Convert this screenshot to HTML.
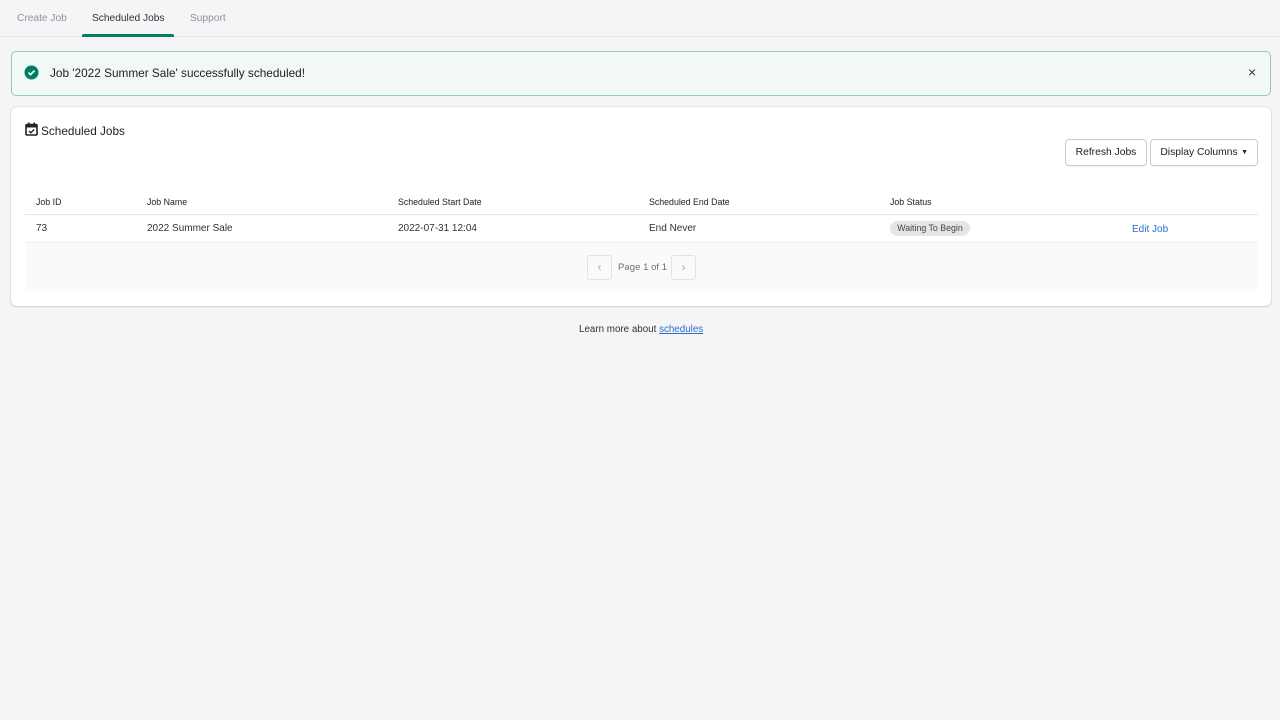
<!DOCTYPE html>
<html><head><meta charset="utf-8"><style>
*{box-sizing:border-box;margin:0;padding:0}
body{width:1280px;height:720px;background:#f5f5f7;font-family:"Liberation Sans",sans-serif;color:#202223;position:relative;overflow:hidden}
.abs{position:absolute}
.tabs{position:absolute;left:0;top:0;width:1280px;height:37px;border-bottom:1px solid #e4e5e7}
.tab{position:absolute;top:13px;font-size:10.2px;color:#8c9196}
.banner{left:11px;top:51px;width:1260px;height:45px;background:#f1f8f5;border:1px solid #95c9b4;border-radius:5px}
.card{left:11px;top:107px;width:1260px;height:199px;background:#fff;border-radius:6px;box-shadow:0 0 0 1px rgba(0,0,0,.05),0 1px 2px rgba(0,0,0,.12)}
.btn{position:absolute;top:139px;height:27px;border:1px solid #c9cccf;border-radius:4px;background:#fff;font-size:10.3px;line-height:25px;text-align:center;box-shadow:0 1px 0 rgba(0,0,0,.05)}
.th{position:absolute;top:197px;font-size:8.8px;color:#202223}
.td{position:absolute;top:223px;font-size:10px;color:#303235}
</style></head><body>
<div class="tabs"></div>
<div class="tab" style="left:17px">Create Job</div>
<div class="tab" style="left:92px;color:#303235">Scheduled Jobs</div>
<div class="abs" style="left:82px;top:34px;width:92px;height:3px;background:#008060;border-radius:2px 2px 0 0"></div>
<div class="tab" style="left:190px">Support</div>

<div class="abs banner"></div>
<svg class="abs" style="left:24px;top:65px" width="15" height="15" viewBox="0 0 15 15"><circle cx="7.5" cy="7.5" r="7" fill="#007f5f"/><path d="M4.5 7.6l2 2 4-4" stroke="#fff" stroke-width="1.7" fill="none"/></svg>
<div class="abs" style="left:50px;top:66px;font-size:11.8px;color:#202223">Job '2022 Summer Sale' successfully scheduled!</div>
<div class="abs" style="left:1248px;top:64px;font-size:14px;color:#303235">×</div>

<div class="abs card"></div>
<svg class="abs" style="left:25px;top:122px" width="13" height="14" viewBox="0 0 13 14"><rect x="1" y="2.5" width="11" height="10.5" rx="1" stroke="#202223" stroke-width="1.6" fill="none"/><rect x="1" y="2.5" width="11" height="3" fill="#202223"/><rect x="3" y="0.5" width="1.6" height="3" fill="#202223"/><rect x="8.4" y="0.5" width="1.6" height="3" fill="#202223"/><path d="M4 9l1.8 1.8 3.3-3.3" stroke="#202223" stroke-width="1.4" fill="none"/></svg>
<div class="abs" style="left:41px;top:124px;font-size:11.8px;color:#202223">Scheduled Jobs</div>
<div class="btn" style="left:1065px;width:82px">Refresh Jobs</div>
<div class="btn" style="left:1150px;width:108px;padding-right:10px">Display Columns<span style="position:absolute;right:9px;font-size:7px">▼</span></div>

<div class="th" style="left:36px">Job ID</div>
<div class="th" style="left:147px">Job Name</div>
<div class="th" style="left:398px">Scheduled Start Date</div>
<div class="th" style="left:649px">Scheduled End Date</div>
<div class="th" style="left:890px">Job Status</div>
<div class="abs" style="left:25px;top:214px;width:1233px;height:1px;background:#e4e5e7"></div>
<div class="td" style="left:36px">73</div>
<div class="td" style="left:147px">2022 Summer Sale</div>
<div class="td" style="left:398px">2022-07-31 12:04</div>
<div class="td" style="left:649px">End Never</div>
<div class="abs" style="left:890px;top:221px;width:80px;height:15px;border-radius:8px;background:#e4e5e7;font-size:8.8px;line-height:15px;text-align:center;color:#44474a">Waiting To Begin</div>
<div class="td" style="left:1132px;color:#2c6ecb;top:224px">Edit Job</div>
<div class="abs" style="left:25px;top:242px;width:1233px;height:1px;background:#eceef0"></div>
<div class="abs" style="left:25px;top:243px;width:1233px;height:48px;background:#fafafa"></div>
<div class="abs" style="left:587px;top:255px;width:25px;height:25px;border:1px solid #e1e3e5;border-radius:3px;text-align:center;line-height:22px;color:#aaa;font-size:12px">‹</div>
<div class="abs" style="left:618px;top:262px;font-size:9.6px;color:#6d7175">Page 1 of 1</div>
<div class="abs" style="left:671px;top:255px;width:25px;height:25px;border:1px solid #e1e3e5;border-radius:3px;text-align:center;line-height:22px;color:#aaa;font-size:12px">›</div>

<div class="abs" style="left:579px;top:324px;font-size:9.8px;color:#303235">Learn more about <span style="color:#2c6ecb;text-decoration:underline">schedules</span></div>
</body></html>
